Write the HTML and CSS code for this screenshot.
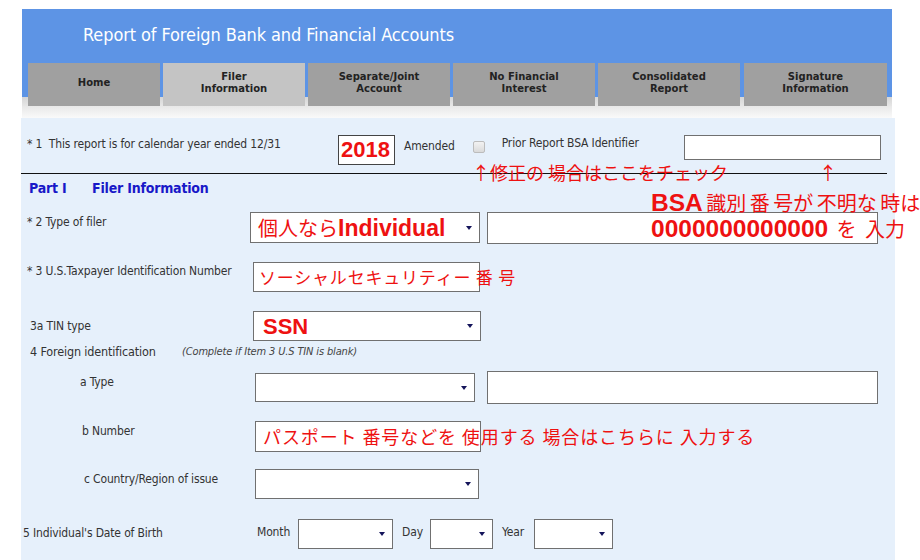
FILE: index.html
```html
<!DOCTYPE html>
<html lang="en">
<head>
<meta charset="utf-8">
<title>Report of Foreign Bank and Financial Accounts</title>
<link rel="stylesheet" href="styles.css">
</head>
<body>
<div class="page">
  <header class="masthead">
    <h1 class="title">Report of Foreign Bank and Financial Accounts</h1>
    <nav class="tabs">
      <div class="tab tab-home">Home</div>
      <div class="tab active">Filer<br>Information</div>
      <div class="tab">Separate/Joint<br>Account</div>
      <div class="tab">No Financial<br>Interest</div>
      <div class="tab">Consolidated<br>Report</div>
      <div class="tab tab-last">Signature<br>Information</div>
    </nav>
  </header>
  <div class="fade"></div>

  <main class="panel">
    <div class="row row-1">
      <span class="lbl lbl-1">* 1&nbsp; This report is for calendar year ended 12/31</span>
      <span class="box yearbox">2018</span>
      <span class="amended">Amended</span>
      <span class="check"></span>
      <span class="prior">Prior Report BSA Identifier</span>
      <span class="box bsa"></span>
    </div>
    <div class="rule"></div>
    <h2 class="part"><span class="part-no">Part I</span><span>Filer Information</span></h2>

    <div class="row row-2">
      <span class="lbl lbl-2">* 2 Type of filer</span>
      <span class="box sel sel-filer"><span class="jp">個人なら</span><b class="en">Individual</b><i class="arrow"></i></span>
      <span class="box wide wide-2"></span>
    </div>

    <div class="row row-3">
      <span class="lbl lbl-3">* 3 U.S.Taxpayer Identification Number</span>
      <span class="box tin"><span class="jp">ソーシャルセキュリティー 番 号</span></span>
    </div>

    <div class="row row-3a">
      <span class="lbl lbl-3a">3a TIN type</span>
      <span class="box sel sel-tin"><b class="en">SSN</b><i class="arrow"></i></span>
    </div>

    <div class="row row-4">
      <span class="lbl lbl-4">4 Foreign identification</span>
      <span class="hint">(Complete if Item 3 U.S TIN is blank)</span>
    </div>

    <div class="row row-a">
      <span class="lbl lbl-a">a Type</span>
      <span class="box sel sel-type"><i class="arrow"></i></span>
      <span class="box wide wide-a"></span>
    </div>

    <div class="row row-b">
      <span class="lbl lbl-b">b Number</span>
      <span class="box num"><span class="jp">パスポート 番号などを 使用する 場合はこちらに 入力する</span></span>
    </div>

    <div class="row row-c">
      <span class="lbl lbl-c">c Country/Region of issue</span>
      <span class="box sel sel-country"><i class="arrow"></i></span>
    </div>

    <div class="row row-5">
      <span class="lbl lbl-5">5 Individual's Date of Birth</span>
      <span class="dob-lbl">Month</span>
      <span class="box sel sel-month"><i class="arrow"></i></span>
      <span class="dob-lbl dob-gap">Day</span>
      <span class="box sel sel-day"><i class="arrow"></i></span>
      <span class="dob-lbl dob-gap">Year</span>
      <span class="box sel sel-year"><i class="arrow"></i></span>
    </div>
  </main>

  <div class="note note-check">↑修正の 場合はここをチェック</div>
  <div class="note note-arrow">↑</div>
  <div class="note note-bsa">
    <div class="bsa-1"><b class="en">BSA</b> 識別 番 号が 不明な 時は</div>
    <div class="bsa-2"><b class="en">0000000000000</b> を 入力</div>
  </div>
</div>
</body>
</html>
```

FILE: styles.css
```css
html, body {
  margin: 0;
  padding: 0;
  background: #ffffff;
}

body {
  font-family: "DejaVu Sans Condensed", "DejaVu Sans", sans-serif;
  color: #333333;
  font-size: 12px;
  letter-spacing: -0.15px;
}

.page {
  position: relative;
  width: 874px;
  margin: 9px 0 0 21px;
  height: 551px;
  overflow: visible;
}

.masthead {
  margin-left: 1px;
  width: 870px;
  background: #5d94e5;
}

.title {
  margin: 0;
  height: 54px;
  padding-left: 61px;
  font-weight: normal;
  font-size: 18px;
  letter-spacing: -0.1px;
  line-height: 52px;
  color: #ffffff;
}

.tabs {
  display: flex;
  gap: 3px;
  height: 43px;
  padding-left: 6px;
  background: linear-gradient(to bottom, #5d94e5 0, #5d94e5 34px, #d6d6d6 34px, #e6e6e6 43px);
}

.tab {
  width: 142px;
  height: 43px;
  background: #a0a0a0;
  display: flex;
  align-items: center;
  justify-content: center;
  text-align: center;
  font-family: "DejaVu Sans", sans-serif;
  font-weight: bold;
  font-size: 10px;
  letter-spacing: 0;
  line-height: 12px;
  color: #222222;
  box-sizing: border-box;
  padding-bottom: 4px;
}

.tab-home { width: 132px; }
.tab-last { width: 143px; margin-left: 1px; }
.tab.active { background: #c4c4c4; }

.fade {
  margin-left: 1px;
  width: 870px;
  height: 12px;
  background: linear-gradient(to bottom, #e8e8e8, #fafafa);
}

.panel {
  background: #e6f0fb;
  height: 442px;
  padding: 17px 0 0 0;
  box-sizing: border-box;
}

.row {
  display: flex;
  align-items: flex-start;
}

.lbl {
  flex: none;
  line-height: 14px;
  white-space: nowrap;
}

.box {
  flex: none;
  position: relative;
  box-sizing: border-box;
  background: #ffffff;
  border: 1px solid #707070;
  white-space: nowrap;
  letter-spacing: 0;
}

.jp {
  font-family: "Noto Sans CJK JP", sans-serif;
  color: #ee1111;
}

.en {
  font-family: "Liberation Sans", Arial, sans-serif;
  font-weight: bold;
  color: #ee1111;
}

.arrow {
  position: absolute;
  right: 7px;
  top: 50%;
  margin-top: -2px;
  width: 0;
  height: 0;
  border-left: 3px solid transparent;
  border-right: 3px solid transparent;
  border-top: 4px solid #14145a;
}

/* row 1 */
.row-1 { height: 30px; }
.lbl-1 { width: 311px; padding: 2px 0 0 6px; }
.yearbox {
  width: 57px;
  height: 30px;
  border-color: #444444;
  font-family: "Liberation Sans", Arial, sans-serif;
  font-weight: bold;
  font-size: 22px;
  line-height: 28px;
  color: #ee1111;
  padding-left: 2px;
}
.amended { margin-left: 9px; padding-top: 4px; line-height: 14px; }
.check {
  flex: none;
  width: 12px;
  height: 12px;
  margin: 6px 0 0 18px;
  border: 1px solid #bcbcbc;
  border-radius: 2px;
  background: linear-gradient(#f2f2f2, #dadada);
  box-sizing: border-box;
}
.prior { margin-left: 17px; padding-top: 1px; line-height: 14px; }
.bsa { width: 197px; height: 25px; margin-left: 45px; }

.rule {
  margin-top: 8px;
  width: 866px;
  height: 0;
  border-top: 1px solid #111111;
}

.part {
  margin: 5px 0 0 8px;
  height: 18px;
  display: flex;
  font-size: 14px;
  letter-spacing: -0.2px;
  line-height: 18px;
  color: #1818c8;
  font-weight: bold;
}
.part-no { width: 63px; }

/* row 2 */
.row-2 { margin-top: 15px; height: 32px; }
.lbl-2 { width: 223px; padding: 3px 0 0 6px; }
.sel-filer { width: 230px; height: 31px; line-height: 29px; padding-left: 7px; }
.sel-filer .jp { font-size: 20px; }
.sel-filer .en { font-size: 23px; }
.wide { height: 32px; }
.wide-2 { width: 391px; margin-left: 7px; }

/* row 3 */
.row-3 { margin-top: 18px; height: 30px; }
.lbl-3 { width: 226px; padding: 2px 0 0 6px; }
.tin { width: 227px; height: 30px; line-height: 28px; padding-left: 5px; overflow: visible; }
.tin .jp { font-size: 17px; letter-spacing: 0.8px; }

/* row 3a */
.row-3a { margin-top: 19px; height: 30px; }
.lbl-3a { width: 223px; padding: 8px 0 0 9px; }
.sel-tin { width: 228px; height: 30px; line-height: 30px; padding-left: 9px; }
.sel-tin .en { font-size: 22px; }

/* row 4 */
.row-4 { margin-top: 4px; height: 14px; }
.lbl-4 { width: 152px; padding-left: 9px; font-size: 12.5px; }
.hint { font-style: italic; font-size: 11px; line-height: 14px; color: #444444; }

/* a Type */
.row-a { margin-top: 12px; height: 33px; }
.lbl-a { width: 175px; padding: 4px 0 0 59px; }
.sel-type { width: 220px; height: 29px; margin-top: 2px; }
.wide-a { width: 391px; height: 33px; margin-left: 12px; }

/* b Number */
.row-b { margin-top: 17px; height: 31px; }
.lbl-b { width: 173px; padding: 3px 0 0 61px; }
.num { width: 226px; height: 31px; line-height: 29px; padding-left: 7px; overflow: visible; }
.num .jp { font-size: 18px; letter-spacing: 0.9px; }

/* c Country */
.row-c { margin-top: 17px; height: 30px; }
.lbl-c { width: 171px; padding: 3px 0 0 63px; }
.sel-country { width: 224px; height: 30px; }

/* DOB */
.row-5 { margin-top: 20px; height: 30px; }
.lbl-5 { width: 234px; padding: 7px 0 0 2px; }
.dob-lbl { flex: none; padding-top: 6px; line-height: 14px; }
.dob-gap { margin-left: 9px; }
.sel-month { width: 95px; height: 30px; margin-left: 8px; }
.sel-day { width: 63px; height: 30px; margin-left: 7px; }
.sel-year { width: 79px; height: 30px; margin-left: 10px; }

/* annotations overlaid on the form */
.note {
  position: absolute;
  color: #ee1111;
  font-family: "Noto Sans CJK JP", sans-serif;
  white-space: nowrap;
  letter-spacing: 0;
}
.note-check { left: 451px; top: 151px; font-size: 18px; line-height: 24px; }
.note-arrow { left: 798px; top: 151px; font-size: 18px; line-height: 24px; }
.note-bsa {
  left: 630px;
  top: 181px;
  font-size: 20px;
  line-height: 26px;
}
.bsa-1 { word-spacing: -1px; }
.bsa-2 { word-spacing: 4px; }
.note-bsa .en { font-size: 24.5px; }
```
